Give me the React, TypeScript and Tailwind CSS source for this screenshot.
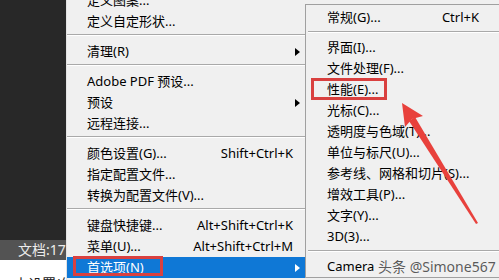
import React from "react";

type Item = { label?: string; shortcut?: string; arrow?: boolean; sep?: boolean; hl?: boolean };

const mainItems: Item[] = [
  { label: "定义图案..." },
  { label: "定义自定形状..." },
  { sep: true },
  { label: "清理(R)", arrow: true },
  { sep: true },
  { label: "Adobe PDF 预设..." },
  { label: "预设", arrow: true },
  { label: "远程连接..." },
  { sep: true },
  { label: "颜色设置(G)...", shortcut: "Shift+Ctrl+K" },
  { label: "指定配置文件..." },
  { label: "转换为配置文件(V)..." },
  { sep: true },
  { label: "键盘快捷键...", shortcut: "Alt+Shift+Ctrl+K" },
  { label: "菜单(U)...", shortcut: "Alt+Shift+Ctrl+M" },
  { label: "首选项(N)", arrow: true, hl: true },
];

const subItems: Item[] = [
  { label: "常规(G)...", shortcut: "Ctrl+K" },
  { sep: true },
  { label: "界面(I)..." },
  { label: "文件处理(F)..." },
  { label: "性能(E)..." },
  { label: "光标(C)..." },
  { label: "透明度与色域(T)..." },
  { label: "单位与标尺(U)..." },
  { label: "参考线、网格和切片(S)..." },
  { label: "增效工具(P)..." },
  { label: "文字(Y)..." },
  { label: "3D(3)..." },
  { sep: true },
];

function Arrow({ white }: { white?: boolean }) {
  return (
    <svg width="5" height="8" viewBox="0 0 5 8" className="absolute right-[5px] top-[7px]">
      <polygon points="0,0 5,4 0,8" fill={white ? "#ffffff" : "#000000"} />
    </svg>
  );
}

export default function App() {
  return (
    <div
      className="relative w-[499px] h-[280px] overflow-hidden flex bg-[#f0f0f0] text-[13px] text-black"
      style={{ fontFamily: '"Noto Sans", "Noto Sans CJK SC", sans-serif' }}
    >
      {/* left workspace */}
      <div className="w-[66px] shrink-0 flex flex-col">
        <div className="h-[240px] bg-[#282828]" />
        <div className="h-[20px] bg-[#535353] text-[#ececec] text-[14px] leading-[20px] pl-[18px] whitespace-nowrap overflow-hidden">
          文档:175
        </div>
        <div className="flex-1 bg-white text-[14px] leading-none pl-[14px] pt-[17px] whitespace-nowrap overflow-hidden text-[#222]">
          未设置(伦
        </div>
      </div>

      {/* main menu */}
      <div className="w-[239px] shrink-0 bg-[#f0f0f0] border-l border-[#e2e2e2]">
        <div className="-mt-[10px] flex flex-col">
          {mainItems.map((it, i) =>
            it.sep ? (
              <div key={i} className="h-[9px] pt-[2px]">
                <div className="h-px bg-[#a9a9a9]" />
                <div className="h-px bg-white" />
              </div>
            ) : (
              <div
                key={i}
                className={
                  "relative h-[21px] leading-[21px] pl-[20px] pr-[12px] flex justify-between whitespace-nowrap " +
                  (it.hl ? "bg-[#0f78d6] text-white" : "")
                }
              >
                <span>{it.label}</span>
                {it.shortcut && <span>{it.shortcut}</span>}
                {it.arrow && <Arrow white={it.hl} />}
              </div>
            )
          )}
        </div>
      </div>

      {/* submenu */}
      <div className="mt-[4px] w-[200px] h-[274px] shrink-0 bg-[#f0f0f0] border border-[#a0a0a0] pt-[2px]">
        {subItems.map((it, i) =>
          it.sep ? (
            <div key={i} className="h-[9px] pt-[3px] pl-[2px]">
              <div className="h-px bg-[#a9a9a9]" />
              <div className="h-px bg-white" />
            </div>
          ) : (
            <div
              key={i}
              className="h-[21px] leading-[21px] pl-[21px] pr-[25px] flex justify-between whitespace-nowrap"
            >
              <span>{it.label}</span>
              {it.shortcut && <span>{it.shortcut}</span>}
            </div>
          )
        )}
        <div className="relative h-[21px] leading-[21px] pl-[21px] whitespace-nowrap">
          <span>Camera</span>
          <span
            className="absolute left-[72px] top-0 text-[#5a5a5a] text-[14px]"
            style={{ textShadow: "0 0 1px #ffffff" }}
          >
            头条 @Simone567
          </span>
        </div>
      </div>

      {/* annotations */}
      <div className="absolute left-[73px] top-[256px] w-[90px] h-[20px] border-[3px] border-[#d9403f]" />
      <div className="absolute left-[311px] top-[78px] w-[76px] h-[22px] border-[3px] border-[#d9403f]" />
      <svg className="absolute left-0 top-0" width="499" height="280" viewBox="0 0 499 280">
        <polygon points="478,223 476,224 409,121 415,117" fill="#e8413c" />
        <polygon points="402,103 423,116 412,119 405,127" fill="#e8413c" />
      </svg>
    </div>
  );
}
